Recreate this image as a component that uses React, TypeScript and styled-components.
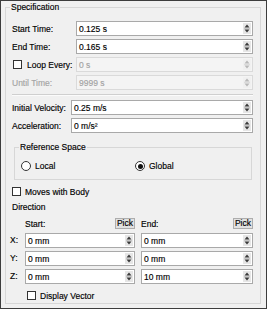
import React from 'react'
import styled, { createGlobalStyle, css } from 'styled-components'

const GlobalStyle = createGlobalStyle`
  body {
    margin: 0;
    font-family: 'Liberation Sans', Arial, sans-serif;
  }
`

const Frame = styled.div`
  width: 267px;
  height: 309px;
  box-sizing: border-box;
  border: 1px solid #3d3d3d;
  background: #f0f0f0;
  padding: 1px 5px 4px 4px;
  display: flex;
  flex-direction: column;
  font-size: 8.5px;
  color: #000;
  -webkit-text-stroke: 0.15px currentColor;
`

const Group = styled.fieldset<{ $fill?: boolean }>`
  margin: 0;
  padding: 0;
  border: 1px solid #d7d7d7;
  min-width: 0;
  ${(p) =>
    p.$fill &&
    css`
      flex: 1;
    `}
`

const Legend = styled.legend`
  margin-left: 4px;
  padding: 0 1px;
  line-height: 10px;
  font-size: 8.5px;
`

const Body = styled.div`
  display: flex;
  flex-direction: column;
  padding: 9px 7px 0 6px;
`

const Rows = styled.div`
  display: flex;
  flex-direction: column;
  gap: 3px;
`

const FieldRow = styled.div<{ $labelWidth: number }>`
  display: grid;
  grid-template-columns: ${(p) => p.$labelWidth}px 1fr;
  align-items: center;
  height: 15px;
`

const Label = styled.span<{ $disabled?: boolean }>`
  display: flex;
  align-items: center;
  gap: 5px;
  white-space: nowrap;
  color: ${(p) => (p.$disabled ? '#a3a3a3' : '#000')};
`

const Field = styled.div<{ $disabled?: boolean }>`
  display: flex;
  align-items: center;
  height: 15px;
  box-sizing: border-box;
  border: 1px solid ${(p) => (p.$disabled ? '#dadada' : '#a9a9a9')};
  background: ${(p) => (p.$disabled ? '#f4f4f4' : '#fff')};
  color: ${(p) => (p.$disabled ? '#a3a3a3' : '#000')};
`

const Value = styled.span`
  flex: 1;
  padding-left: 2px;
  white-space: nowrap;
  overflow: hidden;
`

const Separator = styled.div`
  margin: 4px 0 4px;
  border-top: 1px solid #cfcfcf;
  border-bottom: 1px solid #fbfbfb;
`

const InnerGroup = styled(Group)`
  margin: 9px 1px 0 2px;
`

const RadioRow = styled.div`
  display: grid;
  grid-template-columns: 114px 1fr;
  padding: 9px 0 8px 6px;
  height: 10px;
`

const Choice = styled.label`
  display: flex;
  align-items: center;
  gap: 4px;
  line-height: 10px;
`

const Radio = styled.span<{ $checked?: boolean }>`
  width: 10px;
  height: 10px;
  box-sizing: border-box;
  border-radius: 50%;
  border: 1px solid #333;
  background: #fff;
  display: flex;
  align-items: center;
  justify-content: center;
  &::after {
    content: '';
    width: 5px;
    height: 5px;
    border-radius: 50%;
    background: ${(p) => (p.$checked ? '#111' : 'transparent')};
  }
`

const Check = styled.span`
  width: 9px;
  height: 9px;
  box-sizing: border-box;
  border: 1px solid #333;
  background: #fff;
  flex: none;
`

const CheckRow = styled.label<{ $indent?: number; $top: number }>`
  display: flex;
  align-items: center;
  gap: 4px;
  height: 9px;
  margin-top: ${(p) => p.$top}px;
  padding-left: ${(p) => p.$indent ?? 0}px;
`

const Heading = styled.div`
  margin-top: 6px;
  line-height: 10px;
`

const CoordGrid = styled.div`
  display: grid;
  grid-template-columns: 9px 110px 1fr;
  column-gap: 6px;
  row-gap: 3px;
  margin: 6px 0 0 -2px;
  align-items: center;
`

const ColHead = styled.div`
  display: flex;
  align-items: center;
  justify-content: space-between;
  height: 11px;
  margin-bottom: 1px;
`

const PickButton = styled.button`
  height: 11px;
  padding: 0 1px;
  border: 1px solid #adadad;
  background: #e1e1e1;
  font: inherit;
  font-size: 8.5px;
  line-height: 9px;
  color: #000;
`

const Axis = styled.span`
  line-height: 15px;
`

function Spinner({ disabled }: { disabled?: boolean }) {
  const c = disabled ? '#b8b8b8' : '#3a3a3a'
  return (
    <svg width="8" height="11" viewBox="0 0 8 11" style={{ marginRight: 1 }}>
      <rect x="0" y="0" width="8" height="11" fill={disabled ? '#f0f0f0' : '#e6e6e6'} />
      <path d="M4 1.5 L6.5 4.5 L1.5 4.5 Z" fill={c} />
      <path d="M1.5 6.5 L6.5 6.5 L4 9.5 Z" fill={c} />
      <line x1="1" y1="5.5" x2="7" y2="5.5" stroke={disabled ? '#dcdcdc' : '#c4c4c4'} strokeWidth="1" />
    </svg>
  )
}

function SpinBox({ value, disabled }: { value: string; disabled?: boolean }) {
  return (
    <Field $disabled={disabled}>
      <Value>{value}</Value>
      <Spinner disabled={disabled} />
    </Field>
  )
}

export default function App() {
  return (
    <>
      <GlobalStyle />
      <Frame>
        <Group $fill>
          <Legend>Specification</Legend>
          <Body>
            <Rows>
              <FieldRow $labelWidth={64}>
                <Label>Start Time:</Label>
                <SpinBox value="0.125 s" />
              </FieldRow>
              <FieldRow $labelWidth={64}>
                <Label>End Time:</Label>
                <SpinBox value="0.165 s" />
              </FieldRow>
              <FieldRow $labelWidth={64}>
                <Label>
                  <Check style={{ marginLeft: 1 }} />
                  Loop Every:
                </Label>
                <SpinBox value="0 s" disabled />
              </FieldRow>
              <FieldRow $labelWidth={64}>
                <Label $disabled>Until Time:</Label>
                <SpinBox value="9999 s" disabled />
              </FieldRow>
            </Rows>

            <Separator />

            <Rows>
              <FieldRow $labelWidth={59}>
                <Label>Initial Velocity:</Label>
                <SpinBox value="0.25 m/s" />
              </FieldRow>
              <FieldRow $labelWidth={59}>
                <Label>Acceleration:</Label>
                <SpinBox value="0 m/s²" />
              </FieldRow>
            </Rows>

            <InnerGroup>
              <Legend>Reference Space</Legend>
              <RadioRow>
                <Choice>
                  <Radio />
                  Local
                </Choice>
                <Choice>
                  <Radio $checked />
                  Global
                </Choice>
              </RadioRow>
            </InnerGroup>

            <CheckRow $top={7}>
              <Check />
              Moves with Body
            </CheckRow>

            <Heading>Direction</Heading>

            <CoordGrid>
              <span />
              <ColHead>
                Start:
                <PickButton>Pick</PickButton>
              </ColHead>
              <ColHead>
                End:
                <PickButton>Pick</PickButton>
              </ColHead>

              <Axis>X:</Axis>
              <SpinBox value="0 mm" />
              <SpinBox value="0 mm" />

              <Axis>Y:</Axis>
              <SpinBox value="0 mm" />
              <SpinBox value="0 mm" />

              <Axis>Z:</Axis>
              <SpinBox value="0 mm" />
              <SpinBox value="10 mm" />
            </CoordGrid>

            <CheckRow $top={7} $indent={15}>
              <Check />
              Display Vector
            </CheckRow>
          </Body>
        </Group>
      </Frame>
    </>
  )
}
